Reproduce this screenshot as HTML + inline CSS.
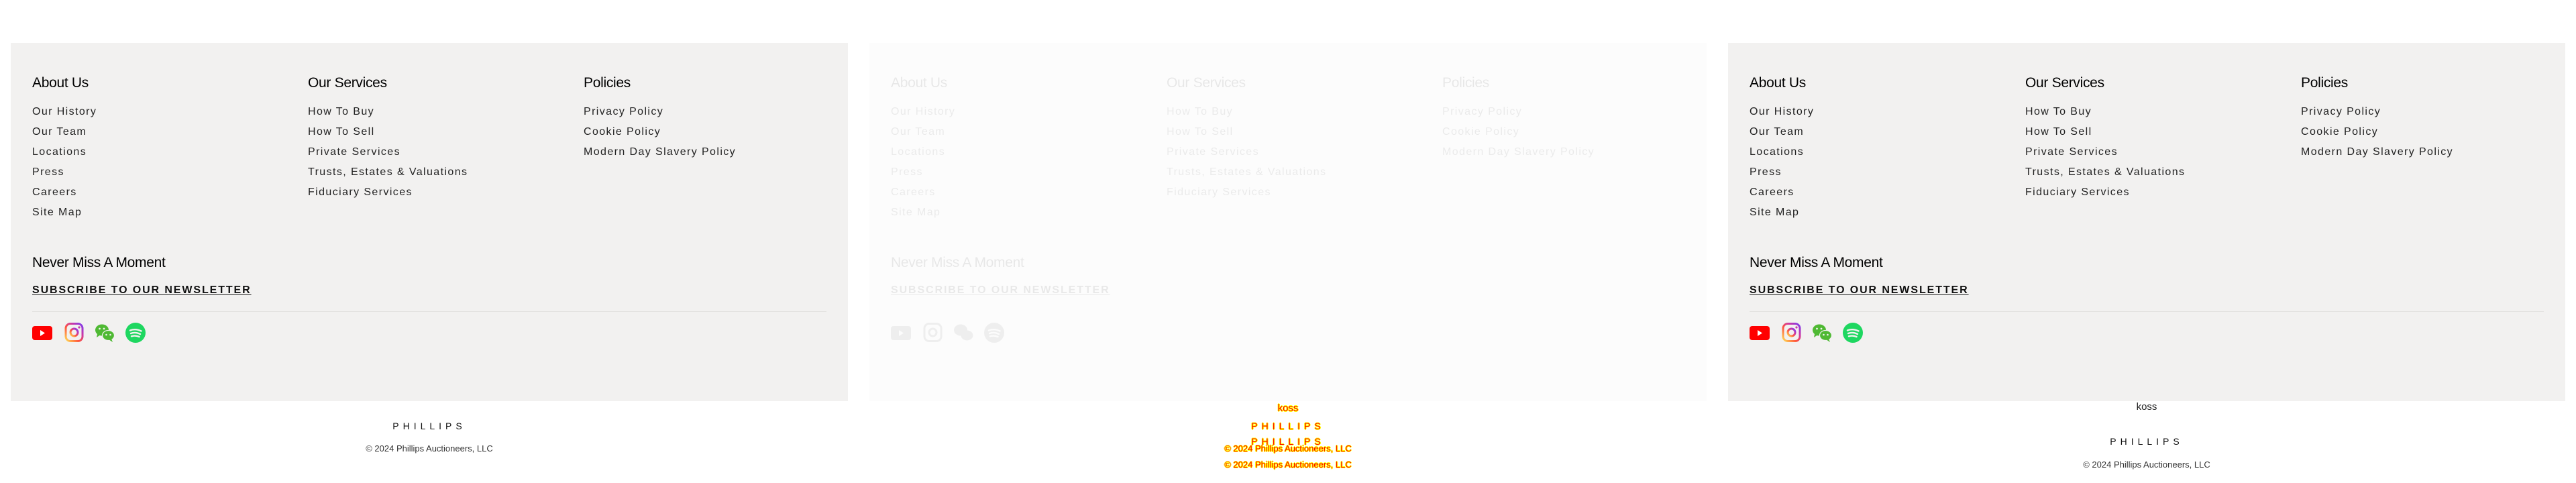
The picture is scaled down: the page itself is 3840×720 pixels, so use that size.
<!DOCTYPE html>
<html><head><meta charset="utf-8"><style>
*{margin:0;padding:0;box-sizing:border-box}
body{width:3840px;height:720px;background:#fff;position:relative;overflow:hidden;font-family:"Liberation Sans",sans-serif}
.col{position:absolute;top:0;width:1280px;height:720px}
.panel{position:absolute;left:16px;top:64px;width:1248px;height:534px;background:#f2f1f0}
.t{position:absolute;white-space:nowrap;color:#1a1a1a}
.h{font-size:21px;color:#000;letter-spacing:-0.3px}
.l{font-size:16px;letter-spacing:1.4px;color:#222}
.sub{font-size:16px;font-weight:bold;letter-spacing:1.9px;color:#111;text-decoration:underline;text-underline-offset:2px}
.div{position:absolute;left:32px;top:400px;width:1184px;height:1px;background:#e2e0de}
.ic{position:absolute;top:417px}
.foot{position:absolute;left:0;width:1280px;text-align:center;white-space:nowrap}
.ph{font-size:14px;letter-spacing:6px;color:#111}
.cp{font-size:13px;color:#333}
.mid .panel{background:#fcfcfc}
.mid .panel > *{opacity:.08}
.err{color:#f00;text-shadow:1px 0 #ff0,-1px 0 #ff0,0 1px #ff0,0 -1px #ff0}
</style></head><body>

<div class="col" style="left:0">
 <div class="panel">
  <div class="t h" style="left:32px;top:48px">About Us</div>
  <div class="t h" style="left:443px;top:48px">Our Services</div>
  <div class="t h" style="left:854px;top:48px">Policies</div>
  <div class="t l" style="left:32px;top:94px">Our History</div>
  <div class="t l" style="left:32px;top:124px">Our Team</div>
  <div class="t l" style="left:32px;top:154px">Locations</div>
  <div class="t l" style="left:32px;top:184px">Press</div>
  <div class="t l" style="left:32px;top:214px">Careers</div>
  <div class="t l" style="left:32px;top:244px">Site Map</div>
  <div class="t l" style="left:443px;top:94px">How To Buy</div>
  <div class="t l" style="left:443px;top:124px">How To Sell</div>
  <div class="t l" style="left:443px;top:154px">Private Services</div>
  <div class="t l" style="left:443px;top:184px">Trusts, Estates &amp; Valuations</div>
  <div class="t l" style="left:443px;top:214px">Fiduciary Services</div>
  <div class="t l" style="left:854px;top:94px">Privacy Policy</div>
  <div class="t l" style="left:854px;top:124px">Cookie Policy</div>
  <div class="t l" style="left:854px;top:154px">Modern Day Slavery Policy</div>
  <div class="t h" style="left:32px;top:316px">Never Miss A Moment</div>
  <div class="t sub" style="left:32px;top:360px">SUBSCRIBE TO OUR NEWSLETTER</div>
  <div class="div"></div>
  <svg class="ic" style="left:32px" width="30" height="30" viewBox="0 0 30 30"><rect x="0" y="5" width="30" height="21" rx="4" fill="#f00"/><path d="M12 11 L19 15.5 L12 20Z" fill="#fff"/></svg>
  <svg class="ic" style="left:80px" width="30" height="30" viewBox="0 0 30 30"><defs><linearGradient id="g" x1="0" y1="1" x2="1" y2="0"><stop offset="0" stop-color="#fd5"/><stop offset=".4" stop-color="#ff543e"/><stop offset=".7" stop-color="#c837ab"/><stop offset="1" stop-color="#7a3cf0"/></linearGradient></defs><rect x="2" y="1.5" width="25" height="26" rx="7" fill="none" stroke="url(#g)" stroke-width="3"/><circle cx="14.5" cy="14.5" r="5.5" fill="none" stroke="url(#g)" stroke-width="3"/><circle cx="22" cy="7" r="1.6" fill="#c837ab"/></svg>
  <svg class="ic" style="left:125px" width="30" height="30" viewBox="0 0 30 30"><ellipse cx="11" cy="11" rx="10" ry="8.5" fill="#4fb933"/><path d="M4 17 L3 22 L9 18Z" fill="#4fb933"/><ellipse cx="20.5" cy="19" rx="9" ry="7.5" fill="#4fb933" stroke="#f2f1f0" stroke-width="1.2"/><path d="M25 24 L27 29 L21 25Z" fill="#4fb933"/><circle cx="7.5" cy="9" r="1.4" fill="#f2f1f0"/><circle cx="14" cy="9" r="1.4" fill="#f2f1f0"/><circle cx="17.5" cy="18" r="1.3" fill="#f2f1f0"/><circle cx="23.5" cy="18" r="1.3" fill="#f2f1f0"/></svg>
  <svg class="ic" style="left:171px" width="30" height="30" viewBox="0 0 30 30"><circle cx="15" cy="15" r="15" fill="#1ed760"/><path d="M7 11.5 Q15 8.5 23.5 12.5 M8 16 Q15 13.5 22 17 M9 20.3 Q15 18.5 20.5 21" stroke="#f2f1f0" stroke-width="2.4" fill="none" stroke-linecap="round"/></svg>
 </div>
 <div class="foot ph" style="top:627px">PHILLIPS</div>
 <div class="foot cp" style="top:661px">© 2024 Phillips Auctioneers, LLC</div>
</div>

<div class="col mid" style="left:1280px">
 <div class="panel">
  <div class="t h" style="left:32px;top:48px">About Us</div>
  <div class="t h" style="left:443px;top:48px">Our Services</div>
  <div class="t h" style="left:854px;top:48px">Policies</div>
  <div class="t l" style="left:32px;top:94px">Our History</div>
  <div class="t l" style="left:32px;top:124px">Our Team</div>
  <div class="t l" style="left:32px;top:154px">Locations</div>
  <div class="t l" style="left:32px;top:184px">Press</div>
  <div class="t l" style="left:32px;top:214px">Careers</div>
  <div class="t l" style="left:32px;top:244px">Site Map</div>
  <div class="t l" style="left:443px;top:94px">How To Buy</div>
  <div class="t l" style="left:443px;top:124px">How To Sell</div>
  <div class="t l" style="left:443px;top:154px">Private Services</div>
  <div class="t l" style="left:443px;top:184px">Trusts, Estates &amp; Valuations</div>
  <div class="t l" style="left:443px;top:214px">Fiduciary Services</div>
  <div class="t l" style="left:854px;top:94px">Privacy Policy</div>
  <div class="t l" style="left:854px;top:124px">Cookie Policy</div>
  <div class="t l" style="left:854px;top:154px">Modern Day Slavery Policy</div>
  <div class="t h" style="left:32px;top:316px">Never Miss A Moment</div>
  <div class="t sub" style="left:32px;top:360px">SUBSCRIBE TO OUR NEWSLETTER</div>
  <svg class="ic" style="left:32px" width="30" height="30" viewBox="0 0 30 30"><rect x="0" y="5" width="30" height="21" rx="4" fill="#555"/><path d="M12 11 L19 15.5 L12 20Z" fill="#fff"/></svg>
  <svg class="ic" style="left:80px" width="30" height="30" viewBox="0 0 30 30"><rect x="2" y="1.5" width="25" height="26" rx="7" fill="none" stroke="#555" stroke-width="3"/><circle cx="14.5" cy="14.5" r="5.5" fill="none" stroke="#555" stroke-width="3"/></svg>
  <svg class="ic" style="left:125px" width="30" height="30" viewBox="0 0 30 30"><ellipse cx="11" cy="11" rx="10" ry="8.5" fill="#555"/><ellipse cx="20.5" cy="19" rx="9" ry="7.5" fill="#555"/></svg>
  <svg class="ic" style="left:171px" width="30" height="30" viewBox="0 0 30 30"><circle cx="15" cy="15" r="15" fill="#555"/><path d="M7 11.5 Q15 8.5 23.5 12.5 M8 16 Q15 13.5 22 17 M9 20.3 Q15 18.5 20.5 21" stroke="#fff" stroke-width="2.4" fill="none" stroke-linecap="round"/></svg>
 </div>
 <div class="foot err" style="top:600px;font-size:15px">koss</div>
 <div class="foot ph err" style="top:627px">PHILLIPS</div>
 <div class="foot ph err" style="top:650px">PHILLIPS</div>
 <div class="foot cp err" style="top:661px">© 2024 Phillips Auctioneers, LLC</div>
 <div class="foot cp err" style="top:685px">© 2024 Phillips Auctioneers, LLC</div>
</div>

<div class="col" style="left:2560px">
 <div class="panel">
  <div class="t h" style="left:32px;top:48px">About Us</div>
  <div class="t h" style="left:443px;top:48px">Our Services</div>
  <div class="t h" style="left:854px;top:48px">Policies</div>
  <div class="t l" style="left:32px;top:94px">Our History</div>
  <div class="t l" style="left:32px;top:124px">Our Team</div>
  <div class="t l" style="left:32px;top:154px">Locations</div>
  <div class="t l" style="left:32px;top:184px">Press</div>
  <div class="t l" style="left:32px;top:214px">Careers</div>
  <div class="t l" style="left:32px;top:244px">Site Map</div>
  <div class="t l" style="left:443px;top:94px">How To Buy</div>
  <div class="t l" style="left:443px;top:124px">How To Sell</div>
  <div class="t l" style="left:443px;top:154px">Private Services</div>
  <div class="t l" style="left:443px;top:184px">Trusts, Estates &amp; Valuations</div>
  <div class="t l" style="left:443px;top:214px">Fiduciary Services</div>
  <div class="t l" style="left:854px;top:94px">Privacy Policy</div>
  <div class="t l" style="left:854px;top:124px">Cookie Policy</div>
  <div class="t l" style="left:854px;top:154px">Modern Day Slavery Policy</div>
  <div class="t h" style="left:32px;top:316px">Never Miss A Moment</div>
  <div class="t sub" style="left:32px;top:360px">SUBSCRIBE TO OUR NEWSLETTER</div>
  <div class="div"></div>
  <svg class="ic" style="left:32px" width="30" height="30" viewBox="0 0 30 30"><rect x="0" y="5" width="30" height="21" rx="4" fill="#f00"/><path d="M12 11 L19 15.5 L12 20Z" fill="#fff"/></svg>
  <svg class="ic" style="left:80px" width="30" height="30" viewBox="0 0 30 30"><defs><linearGradient id="g2" x1="0" y1="1" x2="1" y2="0"><stop offset="0" stop-color="#fd5"/><stop offset=".4" stop-color="#ff543e"/><stop offset=".7" stop-color="#c837ab"/><stop offset="1" stop-color="#7a3cf0"/></linearGradient></defs><rect x="2" y="1.5" width="25" height="26" rx="7" fill="none" stroke="url(#g2)" stroke-width="3"/><circle cx="14.5" cy="14.5" r="5.5" fill="none" stroke="url(#g2)" stroke-width="3"/><circle cx="22" cy="7" r="1.6" fill="#c837ab"/></svg>
  <svg class="ic" style="left:125px" width="30" height="30" viewBox="0 0 30 30"><ellipse cx="11" cy="11" rx="10" ry="8.5" fill="#4fb933"/><path d="M4 17 L3 22 L9 18Z" fill="#4fb933"/><ellipse cx="20.5" cy="19" rx="9" ry="7.5" fill="#4fb933" stroke="#f2f1f0" stroke-width="1.2"/><path d="M25 24 L27 29 L21 25Z" fill="#4fb933"/><circle cx="7.5" cy="9" r="1.4" fill="#f2f1f0"/><circle cx="14" cy="9" r="1.4" fill="#f2f1f0"/><circle cx="17.5" cy="18" r="1.3" fill="#f2f1f0"/><circle cx="23.5" cy="18" r="1.3" fill="#f2f1f0"/></svg>
  <svg class="ic" style="left:171px" width="30" height="30" viewBox="0 0 30 30"><circle cx="15" cy="15" r="15" fill="#1ed760"/><path d="M7 11.5 Q15 8.5 23.5 12.5 M8 16 Q15 13.5 22 17 M9 20.3 Q15 18.5 20.5 21" stroke="#f2f1f0" stroke-width="2.4" fill="none" stroke-linecap="round"/></svg>
 </div>
 <div class="foot" style="top:598px;font-size:15px;color:#222">koss</div>
 <div class="foot ph" style="top:650px">PHILLIPS</div>
 <div class="foot cp" style="top:685px">© 2024 Phillips Auctioneers, LLC</div>
</div>

</body></html>
